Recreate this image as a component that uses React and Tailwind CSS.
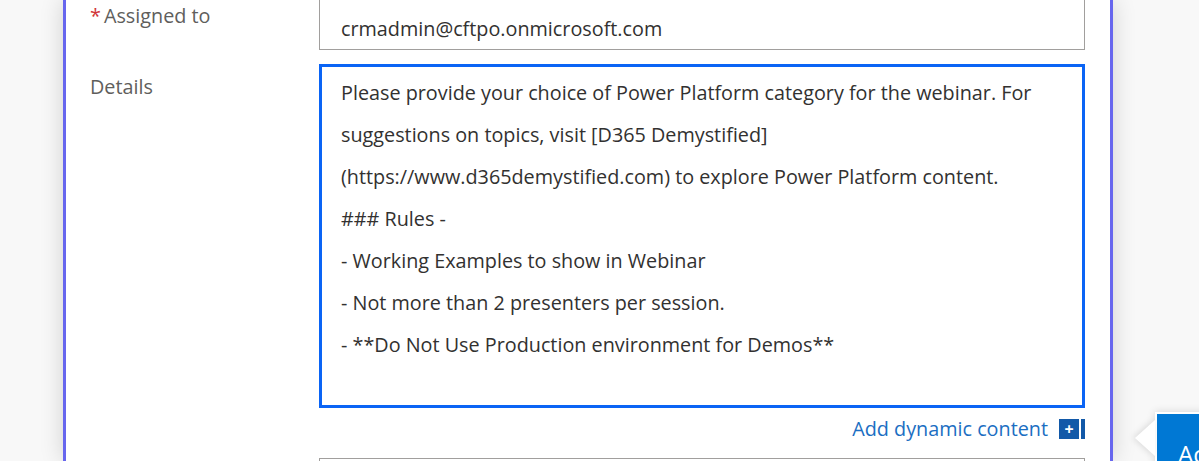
import React from 'react';

const lines = [
  'Please provide your choice of Power Platform category for the webinar. For',
  'suggestions on topics, visit [D365 Demystified]',
  '(https://www.d365demystified.com) to explore Power Platform content.',
  '### Rules -',
  '- Working Examples to show in Webinar',
  '- Not more than 2 presenters per session.',
  '- **Do Not Use Production environment for Demos**',
];

const font = { fontFamily: '"Open Sans", "Noto Sans", sans-serif' };

const App = () => {
  return (
    <div className="relative w-[1199px] h-[461px] overflow-hidden bg-[#f8f8f8]" style={font}>
      {/* flow card */}
      <div className="flex flex-col ml-[63px] w-[1050px] h-[461px] bg-white border-x-[3px] border-[#6766ee] shadow-[0_0_22px_rgba(0,0,0,0.16)] pl-[24px] pr-[25px]">
        {/* Assigned to */}
        <div className="flex -mt-[11px]">
          <div className="w-[229px] pt-[12px] text-[19.8px] text-[#605e5c]">
            <span className="text-[#d13438] mr-[3px]">*</span>Assigned to
          </div>
          <div className="w-[766px] h-[61px] border border-[#a19f9d] pl-[21px] pt-[25px] text-[19.8px] leading-[28px] text-[#323130]">
            crmadmin@cftpo.onmicrosoft.com
          </div>
        </div>

        {/* Details */}
        <div className="flex mt-[14px]">
          <div className="w-[229px] pt-[8px] text-[19.8px] text-[#605e5c]">Details</div>
          <div className="w-[766px] h-[344px] border-[3px] border-[#0a64f5] pl-[19px] pt-[5px] text-[19.8px] leading-[42px] text-[#323130]">
            {lines.map((l) => (
              <div key={l}>{l}</div>
            ))}
          </div>
        </div>

        {/* Add dynamic content */}
        <div className="flex justify-end items-center mt-[11px] h-[20px]">
          <span className="text-[19.8px] text-[#1b6ec2] mr-[11px]">Add dynamic content</span>
          <span className="w-[20px] h-[20px] bg-[#1259a8] text-white flex items-center justify-center text-[16px] font-bold leading-none">+</span>
          <span className="w-[4px] h-[20px] bg-[#1259a8] ml-[2px]" />
        </div>

        {/* next input */}
        <div className="flex mt-[19px]">
          <div className="w-[229px]" />
          <div className="w-[766px] h-[40px] shrink-0 border border-[#a19f9d]" />
        </div>
      </div>

      {/* coach-mark callout on the right */}
      <div className="absolute left-[1135px] top-[412px] flex items-start">
        <div className="mt-[8px] w-0 h-0 border-y-[18px] border-y-transparent border-r-[20px] border-r-white drop-shadow-[-2px_0_3px_rgba(0,0,0,0.12)]" />
        <div className="bg-white p-[2px] shadow-[0_0_8px_rgba(0,0,0,0.15)]">
          <div className="w-[60px] h-[60px] bg-[#0078d4] text-white text-[24px] pl-[21px] pt-[22px]">Ac</div>
        </div>
      </div>
    </div>
  );
};

export default App;
